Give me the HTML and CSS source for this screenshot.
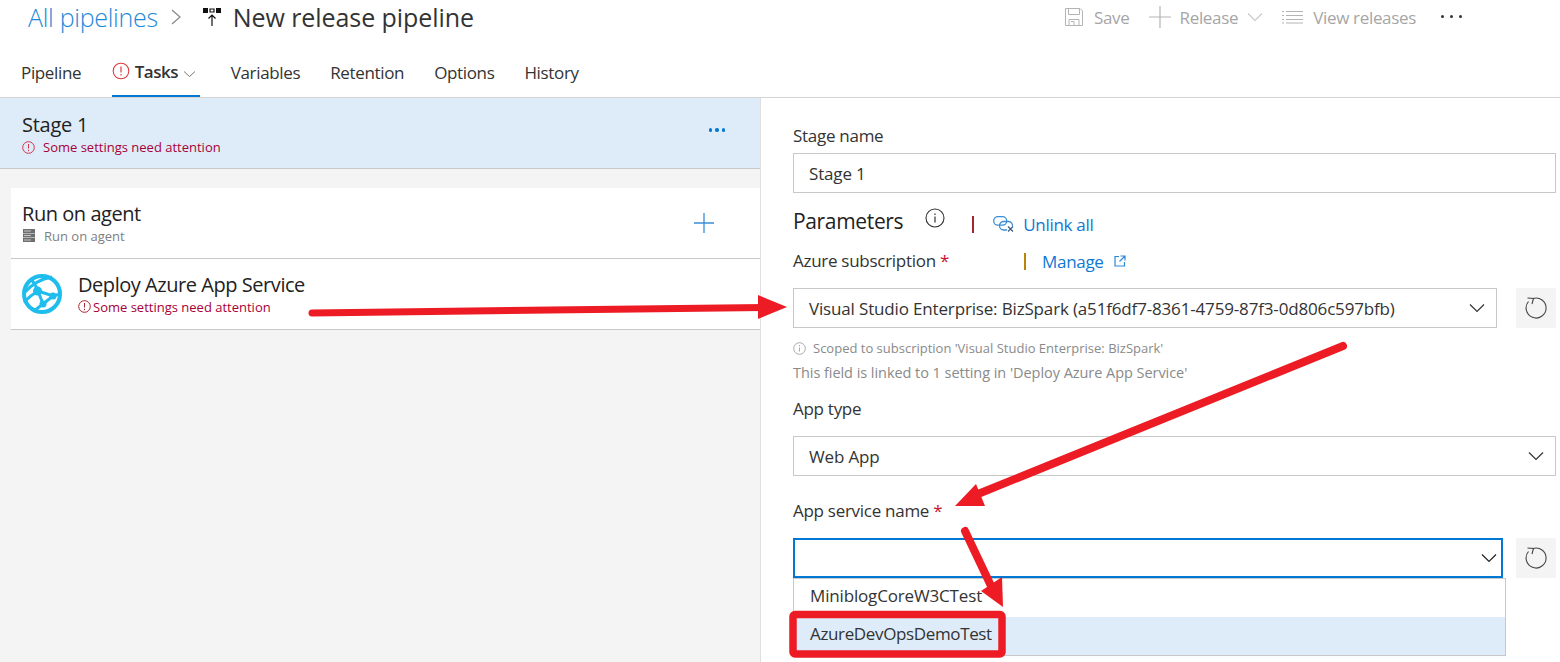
FILE: index.html
```html
<!DOCTYPE html>
<html lang="en">
<head>
<meta charset="utf-8">
<title>New release pipeline</title>
<link rel="stylesheet" href="styles.css">
</head>
<body>
<div class="page">
  <header class="top">
    <div class="crumbs">
      <a class="crumb-link">All pipelines</a>
      <svg class="crumb-sep" width="12" height="20" viewBox="0 0 12 20"><path d="M2 3l8 7-8 7" fill="none" stroke="#8a8886" stroke-width="1.2"/></svg>
      <svg class="pipe-icon" width="20" height="20" viewBox="0 0 20 20"><path d="M1 1h5v5H1zM14 1h5v5h-5z" fill="#111"/><path d="M8 2h4v3H8z" fill="none" stroke="#111" stroke-width="1.2"/><path d="M10 19V8M6.500 11.500L10 8l3.500 3.500" fill="none" stroke="#111" stroke-width="1.2"/></svg>
      <h1 class="title">New release pipeline</h1>
      <div class="actions">
        <span class="action save">
          <svg width="18" height="18" viewBox="0 0 18 18"><path d="M.5.5h14.500l2.500 2.500v14.500H.5z" fill="none" stroke="#b4b4b4"/><path d="M3.500 1v5.500h11V1M4 17.500v-6h10v6M6 13.500h3v4" fill="none" stroke="#b4b4b4"/></svg>
          Save
        </span>
        <span class="action release">
          <svg width="22" height="22" viewBox="0 0 22 22"><path d="M11 0v22M0 11h22" stroke="#b4b4b4" stroke-width="1.2"/></svg>
          Release
          <svg width="16" height="10" viewBox="0 0 16 10"><path d="M1 1.500l7 7 7-7" fill="none" stroke="#c8c8c8" stroke-width="1.100"/></svg>
        </span>
        <span class="action views">
          <svg width="21" height="14" viewBox="0 0 21 14"><path d="M4 1.500h17M4 5.500h17M4 9.500h17M4 13h17M0 1.500h2M0 5.500h2M0 9.500h2M0 13h2" stroke="#b4b4b4"/></svg>
          View releases
        </span>
        <span class="more-dots"><i></i><i></i><i></i></span>
      </div>
    </div>
    <nav class="tabs">
      <a class="tab">Pipeline</a>
      <a class="tab tab-active">
        <svg class="tab-warn" width="18" height="18" viewBox="0 0 18 18"><circle cx="9" cy="9" r="7.800" fill="none" stroke="#e03a3e" stroke-width="1.100"/><path d="M9 4.500v6M9 12v1.500" stroke="#e03a3e" stroke-width="1.200"/></svg>
        <b>Tasks</b>
        <svg class="tab-caret" width="13" height="8" viewBox="0 0 13 8"><path d="M1 1.500l5.500 5 5.500-5" fill="none" stroke="#777" stroke-width="1"/></svg>
      </a>
      <a class="tab">Variables</a>
      <a class="tab">Retention</a>
      <a class="tab">Options</a>
      <a class="tab">History</a>
    </nav>
  </header>
  <main class="main">
    <section class="left">
      <div class="stage">
        <div>
          <div class="stage-name">Stage 1</div>
          <div class="warn warn-stage">
            <svg width="13" height="13" viewBox="0 0 13 13"><circle cx="6.500" cy="6.500" r="5.800" fill="none" stroke="#d8304a"/><path d="M6.500 3v4.500M6.500 8.800v1.400" stroke="#d8304a"/></svg>
            Some settings need attention
          </div>
        </div>
        <span class="stage-more"><i></i><i></i><i></i></span>
      </div>
      <div class="row row-agent">
        <div>
          <div class="row-title">Run on agent</div>
          <div class="row-sub">
            <svg width="12" height="13" viewBox="0 0 12 13"><path d="M0 0h12v4H0zM0 4.500h12v4H0zM0 9h12v4H0z" fill="#6f6f6f"/><path d="M1 2h7M1 6.500h7M1 11h7" stroke="#ddd" stroke-width=".8"/></svg>
            Run on agent
          </div>
        </div>
        <svg width="22" height="22" viewBox="0 0 22 22"><path d="M11 1v20M1 11h20" stroke="#3a8ed8" stroke-width="1.300"/></svg>
      </div>
      <div class="row row-task">
        <svg width="40" height="40" viewBox="0 0 40 40">
          <circle cx="20" cy="20" r="18" fill="#fff" stroke="#1fbcee" stroke-width="4"/>
          <path d="M2 19C9 11 18 5 30 3M9 5c3 4 6 8 7 12M2 28c4-4 9-8 14-11l15 5 7-2M16 17l5 13-9 7M21 30l10-8" fill="none" stroke="#1fbcee" stroke-width="3"/>
          <circle cx="15.500" cy="17" r="4.500" fill="#1fbcee"/><circle cx="31" cy="22" r="3.500" fill="#1fbcee"/><circle cx="21" cy="30" r="3.500" fill="#1fbcee"/>
        </svg>
        <div>
          <div class="row-title">Deploy Azure App Service</div>
          <div class="warn warn-task">
            <svg width="13" height="13" viewBox="0 0 13 13"><circle cx="6.500" cy="6.500" r="5.800" fill="none" stroke="#a4262c"/><path d="M6.500 3v4.500M6.500 8.800v1.400" stroke="#a4262c"/></svg>
            Some settings need attention
          </div>
        </div>
      </div>
    </section>
    <section class="right">
      <label class="label">Stage name</label>
      <div class="field field-text">Stage 1</div>
      <div class="params">
        <h2 class="params-title">Parameters</h2>
        <svg class="params-info" width="20" height="20" viewBox="0 0 20 20"><circle cx="10" cy="10" r="9" fill="none" stroke="#333" stroke-width="1.100"/><path d="M10 8.500v6M10 5.500v1.500" stroke="#333" stroke-width="1.200"/></svg>
        <span class="divider divider-red"></span>
        <svg class="link-icon" width="21" height="16" viewBox="0 0 21 16"><rect x=".7" y=".7" width="13" height="8.500" rx="4.200" fill="none" stroke="#3c8fd6" stroke-width="1.300"/><rect x="6.500" y="5.500" width="13" height="8.500" rx="4.200" fill="none" stroke="#3c8fd6" stroke-width="1.300"/><path d="M14 10h7v6h-7z" fill="#fff"/><path d="M15 10.500l5 5M20 10.500l-5 5" stroke="#3a5a80" stroke-width="1.200"/></svg>
        <a class="link">Unlink all</a>
      </div>
      <div class="sub-row">
        <label class="label label-fixed">Azure subscription <span class="req">*</span></label>
        <span class="divider divider-amber"></span>
        <a class="link">Manage</a>
        <svg class="ext" width="12" height="12" viewBox="0 0 12 12"><path d="M5 1.500H1v9.500h9.500V7M6.500 1h4.500v4.500M11 1L5.500 6.500" fill="none" stroke="#2b88d8" stroke-width="1.200"/></svg>
      </div>
      <div class="combo-row">
        <div class="field field-select grow">Visual Studio Enterprise: BizSpark (a51f6df7-8361-4759-87f3-0d806c597bfb)
          <svg class="chev" width="16" height="10" viewBox="0 0 16 10"><path d="M1 1.500l7 7 7-7" fill="none" stroke="#333" stroke-width="1.200"/></svg>
        </div>
        <button class="refresh"><svg width="22" height="22" viewBox="0 0 22 22"><path d="M8 1.500A10 10 0 1 1 3.500 4.500" fill="none" stroke="#444" stroke-width="1.100"/><path d="M2.500 1L8.500 1.500 7 7" fill="none" stroke="#444" stroke-width="1.100"/></svg></button>
      </div>
      <div class="hint">
        <svg width="13" height="13" viewBox="0 0 13 13"><circle cx="6.500" cy="6.500" r="5.800" fill="none" stroke="#aaa"/><path d="M6.500 5.500v4M6.500 3v1.300" stroke="#aaa"/></svg>
        Scoped to subscription 'Visual Studio Enterprise: BizSpark'
      </div>
      <div class="hint hint-2">This field is linked to 1 setting in 'Deploy Azure App Service'</div>
      <label class="label label-type">App type</label>
      <div class="field field-select">Web App
        <svg class="chev" width="16" height="10" viewBox="0 0 16 10"><path d="M1 1.500l7 7 7-7" fill="none" stroke="#333" stroke-width="1.200"/></svg>
      </div>
      <label class="label label-app">App service name <span class="req">*</span></label>
      <div class="combo-row combo-open">
        <div class="field field-focus grow">
          <svg class="chev" width="16" height="10" viewBox="0 0 16 10"><path d="M1 1.500l7 7 7-7" fill="none" stroke="#222" stroke-width="1.200"/></svg>
        </div>
        <button class="refresh"><svg width="22" height="22" viewBox="0 0 22 22"><path d="M8 1.500A10 10 0 1 1 3.500 4.500" fill="none" stroke="#444" stroke-width="1.100"/><path d="M2.500 1L8.500 1.500 7 7" fill="none" stroke="#444" stroke-width="1.100"/></svg></button>
      </div>
      <ul class="options">
        <li class="option">MiniblogCoreW3CTest</li>
        <li class="option option-sel">AzureDevOpsDemoTest</li>
      </ul>
    </section>
  </main>
  <svg class="marks" width="1560" height="662" viewBox="0 0 1560 662">
    <path d="M312 313L765 307.500" stroke="#ed1c24" stroke-width="7" stroke-linecap="round" fill="none"/>
    <path d="M787 307L758 295L758 319z" fill="#ed1c24"/>
    <path d="M1343 346L978 494" stroke="#ed1c24" stroke-width="8" stroke-linecap="round" fill="none"/>
    <path d="M955 506L976 484L985 506z" fill="#ed1c24"/>
    <path d="M965 531L992 588" stroke="#ed1c24" stroke-width="8" stroke-linecap="round" fill="none"/>
    <path d="M1003 607L981 591L1002 577z" fill="#ed1c24"/>
    <rect x="793" y="614.500" width="209" height="39.500" rx="2" fill="none" stroke="#ed1c24" stroke-width="7.500"/>
  </svg>
</div>
</body>
</html>
```
FILE: styles.css
```css
* { box-sizing: border-box; }
html, body { margin: 0; padding: 0; }
body { font-family: "Open Sans", "Noto Sans", sans-serif; color: #333; background: #fff; }
.page { position: relative; width: 1560px; height: 662px; overflow: hidden; }

.top { height: 98px; border-bottom: 1px solid #d4d4d4; }
.crumbs { display: flex; align-items: center; height: 34px; padding-left: 28px; }
.crumb-link { font-size: 25px; line-height: 34px; letter-spacing: -.28px; color: #1e88d8; font-weight: 300; }
.crumb-sep { margin-left: 12px; }
.pipe-icon { margin-left: 20px; }
.title { margin: 0 0 0 11px; font-size: 25px; line-height: 34px; font-weight: 400; letter-spacing: -.07px; color: #333; }
.actions { position: relative; margin-left: auto; margin-right: 144px; display: flex; align-items: center; color: #a6a6a6; font-size: 17px; letter-spacing: -.33px; }
.action { display: flex; align-items: center; }
.save { gap: 11px; }
.release { gap: 9px; margin-left: 19px; }
.views { gap: 10px; margin-left: 19px; }
.more-dots { position: absolute; right: -46px; top: 9px; display: flex; gap: 6px; }
.more-dots i { width: 3px; height: 3px; border-radius: 50%; background: #333; }

.tabs { display: flex; height: 63px; padding: 24px 0 0 21px; font-size: 17px; letter-spacing: -.35px; }
.tab { display: flex; align-items: flex-start; height: 39px; margin-right: 30px; gap: 6px; color: #333; line-height: 30px; }
.tab:first-child { margin-right: 30.500px; }
.tab-warn { margin-top: 4px; }
.tab-caret { margin-top: 12px; }
.tab-active { border-bottom: 2px solid #0078d4; width: 88px; margin-right: 31px; gap: 5px; }
.tab-active b { font-weight: 600; letter-spacing: -.5px; margin-top: -1px; }

.main { display: flex; height: 564px; }
.left { width: 761px; background: #f4f4f4; border-right: 1px solid #e0e0e0; flex: none; }
.stage { height: 71px; background: #deecf9; border-bottom: 1px solid #c8c8c8; display: flex; justify-content: space-between; padding: 14px 35px 0 22px; margin-bottom: 19px; }
.stage-name { font-size: 20px; letter-spacing: -.25px; line-height: 26px; color: #222; }
.warn { display: flex; align-items: center; font-size: 13px; color: #a80038; line-height: 16px; }
.warn-stage { gap: 8px; margin-top: 1px; }
.warn-task { gap: 2px; margin-top: 1px; }
.stage-more { display: flex; gap: 3px; margin-top: 16px; }
.stage-more i { width: 3.500px; height: 3.500px; border-radius: 50%; background: #0078d4; }
.row { margin-left: 11px; background: #fff; border-bottom: 1px solid #c8c8c8; height: 71px; display: flex; align-items: center; }
.row-agent { justify-content: space-between; padding: 0 45px 0 11px; }
.row-task { padding: 0 0 0 11px; gap: 16px; }
.row-title { font-size: 20px; letter-spacing: -.45px; line-height: 26px; color: #222; margin-top: -2px; }
.row-sub { display: flex; align-items: center; gap: 9px; padding-left: 1px; margin-top: 1px; font-size: 13px; color: #808080; line-height: 16px; }

.right { flex: 1; padding: 28px 4px 0 32px; }
.label { display: block; font-size: 17px; letter-spacing: -.28px; line-height: 20px; color: #333; }
.req { color: #c8102e; }
.field { position: relative; height: 40px; border: 1px solid #c8c8c8; background: #fff; font-size: 17px; letter-spacing: -.16px; line-height: 40px; padding-left: 15px; color: #333; }
.field-text { margin-top: 7px; }
.chev { position: absolute; right: 11px; top: 14px; }
.params { display: flex; align-items: center; height: 28px; margin-top: 14px; }
.params-title { margin: 0; font-size: 21px; font-weight: 400; letter-spacing: -.34px; line-height: 26px; color: #222; }
.params-info { margin-left: 22px; position: relative; top: -3px; }
.divider { display: inline-block; width: 2px; height: 17px; }
.divider-red { background: #a4262c; margin-left: 27px; position: relative; top: 3px; }
.divider-amber { background: #b8860b; }
.link-icon { margin-left: 19px; position: relative; top: 3px; }
.link { color: #0f78d4; font-size: 17px; letter-spacing: -.3px; }
.params .link { margin-left: 9px; position: relative; top: 3px; }
.sub-row { display: flex; align-items: center; height: 24px; margin-top: 14px; }
.label-fixed { width: 231px; }
.sub-row .link { margin-left: 16px; }
.ext { margin-left: 10px; }
.combo-row { display: flex; gap: 19px; margin-top: 15px; }
.grow { flex: 1; }
.refresh { width: 40px; height: 40px; border: 0; background: #f4f4f4; padding: 0; display: flex; align-items: center; justify-content: center; flex: none; }
.hint { display: flex; align-items: center; gap: 7px; font-size: 13px; color: #8a8a8a; line-height: 16px; margin-top: 12px; }
.hint-2 { margin-top: 9px; font-size: 14.500px; letter-spacing: -.05px; }
.label-type { margin-top: 18px; }
.field-select { margin-top: 17px; }
.combo-row .field-select { margin-top: 0; }
.label-app { margin-top: 25px; }
.combo-open { gap: 13px; margin-top: 17px; }
.field-focus { border: 2px solid #0078d4; }
.field-focus .chev { right: 4px; top: 13px; }
.options { list-style: none; margin: 0; padding: 0; width: 713px; border: 1px solid #c8c8c8; font-size: 17px; letter-spacing: -.16px; background: #fff; }
.option { height: 38px; line-height: 34px; padding-left: 16px; }
.option-sel { background: #deecf9; letter-spacing: -.36px; }
.marks { position: absolute; left: 0; top: 0; pointer-events: none; }
```
